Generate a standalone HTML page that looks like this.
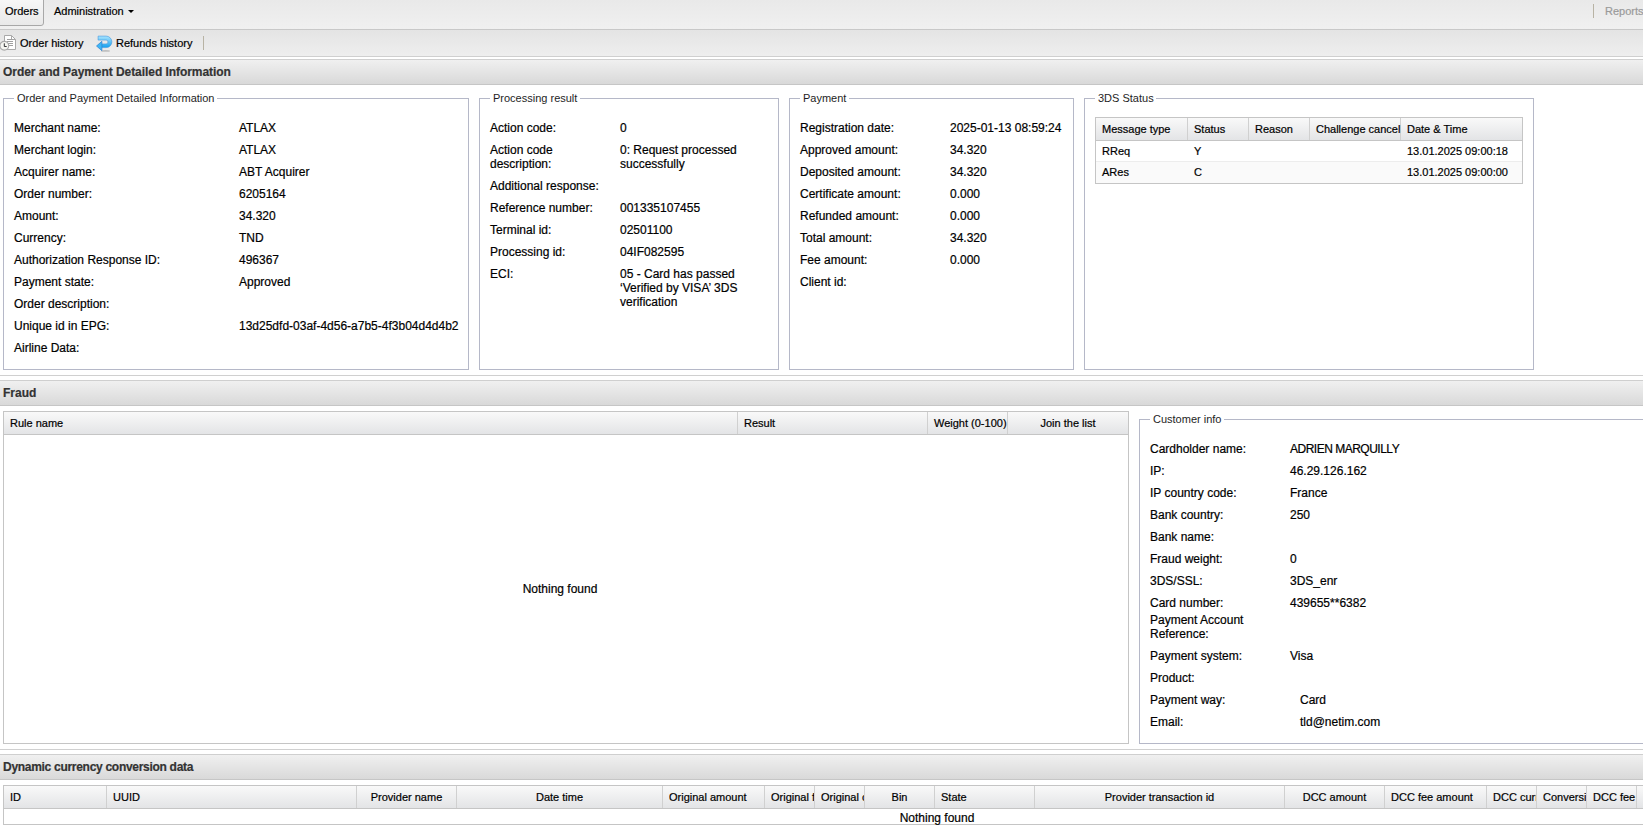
<!DOCTYPE html>
<html><head><meta charset="utf-8"><style>
html,body{margin:0;padding:0;background:#fff;width:1643px;height:828px;overflow:hidden;position:relative}
body{font-family:"Liberation Sans",sans-serif;color:#000;-webkit-text-stroke:0.2px currentColor}
.b{position:absolute;box-sizing:content-box}
.t{position:absolute;white-space:nowrap;line-height:14px;height:14px}
.clip{overflow:hidden}
.hd{font-weight:bold;color:#333}
.lg{color:#1e1e1e;-webkit-text-stroke:0}
</style></head><body>
<div class="b" style="left:0px;top:0px;width:1643px;height:29px;background:linear-gradient(#e9e9e9,#f0f0f0)"></div>
<div class="b" style="left:0px;top:29px;width:1643px;height:1px;background:#c8c8c8"></div>
<div class="b" style="left:-2px;top:-2px;width:44px;height:26px;background:linear-gradient(#f7f7f7,#e9e9e9);border:1px solid #a8a8a8;border-bottom-right-radius:3px;box-sizing:content-box"></div>
<div class="t " style="left:5px;top:4.19px;font-size:11px;">Orders</div>
<div class="t " style="left:54px;top:4.19px;font-size:11px;">Administration</div>
<div class="b" style="left:128px;top:10px;width:0;height:0;border-left:3px solid transparent;border-right:3px solid transparent;border-top:3px solid #000"></div>
<div class="b" style="left:1593px;top:4px;width:1px;height:14px;background:#b8b3a4"></div>
<div class="t " style="left:1605px;top:4.19px;font-size:11px;color:#9a9a9a">Reports</div>
<div class="b" style="left:0px;top:30px;width:1643px;height:26px;background:linear-gradient(#e4e4e4,#eeeeee)"></div>
<div class="b" style="left:0px;top:56px;width:1643px;height:1px;background:#cfcfcf"></div>
<div class="b" style="left:0px;top:57px;width:1643px;height:1px;background:#ffffff"></div>
<div class="b" style="left:0px;top:58px;width:1643px;height:1px;background:#ffffff"></div>
<svg class="b" style="left:0;top:34px" width="18" height="18" viewBox="0 0 18 18">
<path d="M4.5 1.5h7l4 4v10h-11z" fill="#fff" stroke="#a9a9a9" stroke-width="1"/>
<path d="M11.5 1.5v4h4" fill="none" stroke="#a9a9a9" stroke-width="1"/>
<path d="M7 5.5h6M7 7.5h6M8 9.5h5M9 11.5h4" stroke="#a0a0a0" stroke-width="1"/>
<circle cx="4.3" cy="11.8" r="4.4" fill="#f6f6f2" stroke="#a9a9a9" stroke-width="1.2"/>
<path d="M4.3 9.3v3.2h2.4" fill="none" stroke="#333" stroke-width="1"/>
</svg>
<div class="t " style="left:20px;top:36.19px;font-size:11px;">Order history</div>
<svg class="b" style="left:95px;top:34px" width="20" height="20" viewBox="0 0 20 20">
<defs><linearGradient id="rg" x1="0" y1="0" x2="0" y2="1"><stop offset="0" stop-color="#a6e4ff"/><stop offset="0.5" stop-color="#62c2f5"/><stop offset="1" stop-color="#12a0ef"/></linearGradient>
<filter id="bl"><feGaussianBlur stdDeviation="0.6"/></filter></defs>
<ellipse cx="10.5" cy="16.9" rx="4.5" ry="0.9" fill="#9a9a9a" opacity="0.55" filter="url(#bl)"/>
<path d="M3.1 2.1H11.1A5.75 5.75 0 0 1 11.1 13.6H6.6V9.9H11.1A1.9 1.9 0 0 0 11.1 6.1H3.1Z" fill="url(#rg)" stroke="#4496dc" stroke-width="0.6"/>
<path d="M1.5 12L6.9 7.3V16.7Z" fill="#3bb6f6" stroke="#2f80d0" stroke-width="0.7" stroke-linejoin="round"/>
</svg>
<div class="t " style="left:116px;top:36.19px;font-size:11px;">Refunds history</div>
<div class="b" style="left:203px;top:36px;width:1px;height:14px;background:#b8b3a4"></div>
<div class="b" style="left:0px;top:59px;width:1643px;height:1px;background:#cfcfcf"></div>
<div class="b" style="left:0px;top:60px;width:1643px;height:24px;background:linear-gradient(#f0f0f0,#d9d9d9)"></div>
<div class="b" style="left:0px;top:84px;width:1643px;height:1px;background:#c6c6c6"></div>
<div class="t hd" style="left:3px;top:64.84px;font-size:12px;letter-spacing:-0.06px">Order and Payment Detailed Information</div>
<div class="b" style="left:3px;top:98px;width:464px;height:270px;border:1px solid #b5b8c8"></div>
<div class="b" style="left:14px;top:92px;width:203px;height:12px;background:#fff"></div>
<div class="t lg" style="left:17px;top:91.19px;font-size:11px;">Order and Payment Detailed Information</div>
<div class="b" style="left:479px;top:98px;width:298px;height:270px;border:1px solid #b5b8c8"></div>
<div class="b" style="left:490px;top:92px;width:90px;height:12px;background:#fff"></div>
<div class="t lg" style="left:493px;top:91.19px;font-size:11px;">Processing result</div>
<div class="b" style="left:789px;top:98px;width:283px;height:270px;border:1px solid #b5b8c8"></div>
<div class="b" style="left:800px;top:92px;width:49px;height:12px;background:#fff"></div>
<div class="t lg" style="left:803px;top:91.19px;font-size:11px;">Payment</div>
<div class="b" style="left:1084px;top:98px;width:448px;height:270px;border:1px solid #b5b8c8"></div>
<div class="b" style="left:1095px;top:92px;width:61px;height:12px;background:#fff"></div>
<div class="t lg" style="left:1098px;top:91.19px;font-size:11px;">3DS Status</div>
<div class="t " style="left:14px;top:120.84px;font-size:12px;">Merchant name:</div>
<div class="t " style="left:239px;top:120.84px;font-size:12px;">ATLAX</div>
<div class="t " style="left:14px;top:142.84px;font-size:12px;">Merchant login:</div>
<div class="t " style="left:239px;top:142.84px;font-size:12px;">ATLAX</div>
<div class="t " style="left:14px;top:164.84px;font-size:12px;">Acquirer name:</div>
<div class="t " style="left:239px;top:164.84px;font-size:12px;">ABT Acquirer</div>
<div class="t " style="left:14px;top:186.84px;font-size:12px;">Order number:</div>
<div class="t " style="left:239px;top:186.84px;font-size:12px;">6205164</div>
<div class="t " style="left:14px;top:208.84px;font-size:12px;">Amount:</div>
<div class="t " style="left:239px;top:208.84px;font-size:12px;">34.320</div>
<div class="t " style="left:14px;top:230.84px;font-size:12px;">Currency:</div>
<div class="t " style="left:239px;top:230.84px;font-size:12px;">TND</div>
<div class="t " style="left:14px;top:252.84px;font-size:12px;">Authorization Response ID:</div>
<div class="t " style="left:239px;top:252.84px;font-size:12px;">496367</div>
<div class="t " style="left:14px;top:274.84px;font-size:12px;">Payment state:</div>
<div class="t " style="left:239px;top:274.84px;font-size:12px;">Approved</div>
<div class="t " style="left:14px;top:296.84px;font-size:12px;">Order description:</div>
<div class="t " style="left:14px;top:318.84px;font-size:12px;">Unique id in EPG:</div>
<div class="t " style="left:239px;top:318.84px;font-size:12px;">13d25dfd-03af-4d56-a7b5-4f3b04d4d4b2</div>
<div class="t " style="left:14px;top:340.84px;font-size:12px;">Airline Data:</div>
<div class="t " style="left:490px;top:120.84px;font-size:12px;">Action code:</div>
<div class="t " style="left:620px;top:120.84px;font-size:12px;">0</div>
<div class="t " style="left:490px;top:142.84px;font-size:12px;">Action code</div>
<div class="t " style="left:490px;top:156.84px;font-size:12px;">description:</div>
<div class="t " style="left:620px;top:142.84px;font-size:12px;">0: Request processed</div>
<div class="t " style="left:620px;top:156.84px;font-size:12px;">successfully</div>
<div class="t " style="left:490px;top:178.84px;font-size:12px;">Additional response:</div>
<div class="t " style="left:490px;top:200.84px;font-size:12px;">Reference number:</div>
<div class="t " style="left:620px;top:200.84px;font-size:12px;">001335107455</div>
<div class="t " style="left:490px;top:222.84px;font-size:12px;">Terminal id:</div>
<div class="t " style="left:620px;top:222.84px;font-size:12px;">02501100</div>
<div class="t " style="left:490px;top:244.84px;font-size:12px;">Processing id:</div>
<div class="t " style="left:620px;top:244.84px;font-size:12px;">04IF082595</div>
<div class="t " style="left:490px;top:266.84px;font-size:12px;">ECI:</div>
<div class="t " style="left:620px;top:266.84px;font-size:12px;">05 - Card has passed</div>
<div class="t " style="left:620px;top:280.84px;font-size:12px;">&lsquo;Verified by VISA&rsquo; 3DS</div>
<div class="t " style="left:620px;top:294.84px;font-size:12px;">verification</div>
<div class="t " style="left:800px;top:120.84px;font-size:12px;">Registration date:</div>
<div class="t " style="left:950px;top:120.84px;font-size:12px;">2025-01-13 08:59:24</div>
<div class="t " style="left:800px;top:142.84px;font-size:12px;">Approved amount:</div>
<div class="t " style="left:950px;top:142.84px;font-size:12px;">34.320</div>
<div class="t " style="left:800px;top:164.84px;font-size:12px;">Deposited amount:</div>
<div class="t " style="left:950px;top:164.84px;font-size:12px;">34.320</div>
<div class="t " style="left:800px;top:186.84px;font-size:12px;">Certificate amount:</div>
<div class="t " style="left:950px;top:186.84px;font-size:12px;">0.000</div>
<div class="t " style="left:800px;top:208.84px;font-size:12px;">Refunded amount:</div>
<div class="t " style="left:950px;top:208.84px;font-size:12px;">0.000</div>
<div class="t " style="left:800px;top:230.84px;font-size:12px;">Total amount:</div>
<div class="t " style="left:950px;top:230.84px;font-size:12px;">34.320</div>
<div class="t " style="left:800px;top:252.84px;font-size:12px;">Fee amount:</div>
<div class="t " style="left:950px;top:252.84px;font-size:12px;">0.000</div>
<div class="t " style="left:800px;top:274.84px;font-size:12px;">Client id:</div>
<div class="b" style="left:1095px;top:117px;width:426px;height:65px;border:1px solid #c5c5c5"></div>
<div class="b" style="left:1096px;top:118px;width:426px;height:22px;background:linear-gradient(#f9f9f9,#e3e4e6)"></div>
<div class="b" style="left:1096px;top:140px;width:426px;height:1px;background:#c5c5c5"></div>
<div class="b" style="left:1096px;top:161px;width:426px;height:1px;background:#ededed"></div>
<div class="b" style="left:1096px;top:162px;width:426px;height:21px;background:#fafafa"></div>
<div class="b" style="left:1187px;top:118px;width:1px;height:22px;background:#d0d0d0"></div>
<div class="b" style="left:1248px;top:118px;width:1px;height:22px;background:#d0d0d0"></div>
<div class="b" style="left:1309px;top:118px;width:1px;height:22px;background:#d0d0d0"></div>
<div class="b" style="left:1400px;top:118px;width:1px;height:22px;background:#d0d0d0"></div>
<div class="t " style="left:1102px;top:122.19px;font-size:11px;">Message type</div>
<div class="t " style="left:1194px;top:122.19px;font-size:11px;">Status</div>
<div class="t " style="left:1255px;top:122.19px;font-size:11px;">Reason</div>
<div class="t " style="left:1316px;top:122.19px;font-size:11px;">Challenge cancel</div>
<div class="t " style="left:1407px;top:122.19px;font-size:11px;">Date &amp; Time</div>
<div class="t " style="left:1102px;top:144.19px;font-size:11px;">RReq</div>
<div class="t " style="left:1194px;top:144.19px;font-size:11px;">Y</div>
<div class="t " style="left:1407px;top:144.19px;font-size:11px;">13.01.2025 09:00:18</div>
<div class="t " style="left:1102px;top:165.19px;font-size:11px;">ARes</div>
<div class="t " style="left:1194px;top:165.19px;font-size:11px;">C</div>
<div class="t " style="left:1407px;top:165.19px;font-size:11px;">13.01.2025 09:00:00</div>
<div class="b" style="left:0px;top:375px;width:1643px;height:1px;background:#d0d0d0"></div>
<div class="b" style="left:0px;top:380px;width:1643px;height:1px;background:#cfcfcf"></div>
<div class="b" style="left:0px;top:381px;width:1643px;height:24px;background:linear-gradient(#f0f0f0,#d9d9d9)"></div>
<div class="b" style="left:0px;top:405px;width:1643px;height:1px;background:#c6c6c6"></div>
<div class="t hd" style="left:3px;top:385.84px;font-size:12px;letter-spacing:0px">Fraud</div>
<div class="b" style="left:3px;top:411px;width:1124px;height:331px;border:1px solid #c5c5c5"></div>
<div class="b" style="left:4px;top:412px;width:1124px;height:22px;background:linear-gradient(#f9f9f9,#e3e4e6)"></div>
<div class="b" style="left:4px;top:434px;width:1124px;height:1px;background:#c5c5c5"></div>
<div class="b" style="left:737px;top:412px;width:1px;height:22px;background:#d0d0d0"></div>
<div class="b" style="left:927px;top:412px;width:1px;height:22px;background:#d0d0d0"></div>
<div class="b" style="left:1007px;top:412px;width:1px;height:22px;background:#d0d0d0"></div>
<div class="t " style="left:10px;top:416.19px;font-size:11px;">Rule name</div>
<div class="t " style="left:744px;top:416.19px;font-size:11px;">Result</div>
<div class="t " style="left:934px;top:416.19px;font-size:11px;">Weight (0-100)</div>
<div class="t " style="left:1008px;width:120px;text-align:center;top:416.19px;font-size:11px;">Join the list</div>
<div class="t " style="left:460px;width:200px;text-align:center;top:581.84px;font-size:12px;">Nothing found</div>
<div class="b" style="left:1139px;top:419px;width:520px;height:323px;border:1px solid #b5b8c8"></div>
<div class="b" style="left:1150px;top:413px;width:74px;height:12px;background:#fff"></div>
<div class="t lg" style="left:1153px;top:412.19px;font-size:11px;">Customer info</div>
<div class="t " style="left:1150px;top:441.84px;font-size:12px;">Cardholder name:</div>
<div class="t " style="left:1290px;top:441.84px;font-size:12px;letter-spacing:-0.5px">ADRIEN MARQUILLY</div>
<div class="t " style="left:1150px;top:463.84px;font-size:12px;">IP:</div>
<div class="t " style="left:1290px;top:463.84px;font-size:12px;">46.29.126.162</div>
<div class="t " style="left:1150px;top:485.84px;font-size:12px;">IP country code:</div>
<div class="t " style="left:1290px;top:485.84px;font-size:12px;">France</div>
<div class="t " style="left:1150px;top:507.84px;font-size:12px;">Bank country:</div>
<div class="t " style="left:1290px;top:507.84px;font-size:12px;">250</div>
<div class="t " style="left:1150px;top:529.84px;font-size:12px;">Bank name:</div>
<div class="t " style="left:1150px;top:551.84px;font-size:12px;">Fraud weight:</div>
<div class="t " style="left:1290px;top:551.84px;font-size:12px;">0</div>
<div class="t " style="left:1150px;top:573.84px;font-size:12px;">3DS/SSL:</div>
<div class="t " style="left:1290px;top:573.84px;font-size:12px;">3DS_enr</div>
<div class="t " style="left:1150px;top:595.84px;font-size:12px;">Card number:</div>
<div class="t " style="left:1290px;top:595.84px;font-size:12px;">439655**6382</div>
<div class="t " style="left:1150px;top:648.84px;font-size:12px;">Payment system:</div>
<div class="t " style="left:1290px;top:648.84px;font-size:12px;">Visa</div>
<div class="t " style="left:1150px;top:670.84px;font-size:12px;">Product:</div>
<div class="t " style="left:1150px;top:692.84px;font-size:12px;">Payment way:</div>
<div class="t " style="left:1300px;top:692.84px;font-size:12px;">Card</div>
<div class="t " style="left:1150px;top:714.84px;font-size:12px;">Email:</div>
<div class="t " style="left:1300px;top:714.84px;font-size:12px;">tld@netim.com</div>
<div class="t " style="left:1150px;top:612.84px;font-size:12px;">Payment Account</div>
<div class="t " style="left:1150px;top:626.84px;font-size:12px;">Reference:</div>
<div class="b" style="left:0px;top:749px;width:1643px;height:1px;background:#d0d0d0"></div>
<div class="b" style="left:0px;top:754px;width:1643px;height:1px;background:#cfcfcf"></div>
<div class="b" style="left:0px;top:755px;width:1643px;height:24px;background:linear-gradient(#f0f0f0,#d9d9d9)"></div>
<div class="b" style="left:0px;top:779px;width:1643px;height:1px;background:#c6c6c6"></div>
<div class="t hd" style="left:3px;top:759.84px;font-size:12px;letter-spacing:-0.29px">Dynamic currency conversion data</div>
<div class="b" style="left:3px;top:785px;width:1660px;height:38px;border:1px solid #c5c5c5"></div>
<div class="b" style="left:4px;top:786px;width:1656px;height:22px;background:linear-gradient(#f9f9f9,#e3e4e6)"></div>
<div class="b" style="left:4px;top:808px;width:1656px;height:1px;background:#c5c5c5"></div>
<div class="b" style="left:106px;top:786px;width:1px;height:22px;background:#d0d0d0"></div>
<div class="b" style="left:356px;top:786px;width:1px;height:22px;background:#d0d0d0"></div>
<div class="b" style="left:456px;top:786px;width:1px;height:22px;background:#d0d0d0"></div>
<div class="b" style="left:662px;top:786px;width:1px;height:22px;background:#d0d0d0"></div>
<div class="b" style="left:764px;top:786px;width:1px;height:22px;background:#d0d0d0"></div>
<div class="b" style="left:814px;top:786px;width:1px;height:22px;background:#d0d0d0"></div>
<div class="b" style="left:864px;top:786px;width:1px;height:22px;background:#d0d0d0"></div>
<div class="b" style="left:934px;top:786px;width:1px;height:22px;background:#d0d0d0"></div>
<div class="b" style="left:1034px;top:786px;width:1px;height:22px;background:#d0d0d0"></div>
<div class="b" style="left:1284px;top:786px;width:1px;height:22px;background:#d0d0d0"></div>
<div class="b" style="left:1384px;top:786px;width:1px;height:22px;background:#d0d0d0"></div>
<div class="b" style="left:1486px;top:786px;width:1px;height:22px;background:#d0d0d0"></div>
<div class="b" style="left:1536px;top:786px;width:1px;height:22px;background:#d0d0d0"></div>
<div class="b" style="left:1586px;top:786px;width:1px;height:22px;background:#d0d0d0"></div>
<div class="b" style="left:1636px;top:786px;width:1px;height:22px;background:#d0d0d0"></div>
<div class="t clip" style="left:10px;width:96px;top:789.84px;font-size:11px">ID</div>
<div class="t clip" style="left:113px;width:243px;top:789.84px;font-size:11px">UUID</div>
<div class="t clip" style="left:357px;width:99px;text-align:center;top:790.19px;font-size:11px;">Provider name</div>
<div class="t clip" style="left:457px;width:205px;text-align:center;top:790.19px;font-size:11px;">Date time</div>
<div class="t clip" style="left:669px;width:95px;top:789.84px;font-size:11px">Original amount</div>
<div class="t clip" style="left:771px;width:43px;top:789.84px;font-size:11px">Original fee</div>
<div class="t clip" style="left:821px;width:43px;top:789.84px;font-size:11px">Original currency</div>
<div class="t clip" style="left:865px;width:69px;text-align:center;top:790.19px;font-size:11px;">Bin</div>
<div class="t clip" style="left:941px;width:93px;top:789.84px;font-size:11px">State</div>
<div class="t clip" style="left:1035px;width:249px;text-align:center;top:790.19px;font-size:11px;">Provider transaction id</div>
<div class="t clip" style="left:1285px;width:99px;text-align:center;top:790.19px;font-size:11px;">DCC amount</div>
<div class="t clip" style="left:1391px;width:95px;top:789.84px;font-size:11px">DCC fee amount</div>
<div class="t clip" style="left:1493px;width:43px;top:789.84px;font-size:11px">DCC currency</div>
<div class="t clip" style="left:1543px;width:43px;top:789.84px;font-size:11px">Conversion rate</div>
<div class="t clip" style="left:1593px;width:43px;top:789.84px;font-size:11px">DCC fee</div>
<div class="t " style="left:837px;width:200px;text-align:center;top:810.84px;font-size:12px;">Nothing found</div>
</body></html>
